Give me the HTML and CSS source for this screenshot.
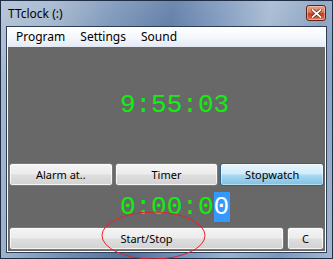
FILE: index.html
```html
<!DOCTYPE html>
<html>
<head>
<meta charset="utf-8">
<link rel="stylesheet" href="styles.css">
</head>
<body>
<div class="window">
  <div class="titlebar">
    <span class="title">TTclock (:)</span>
    <span class="close">
      <svg width="11" height="9" viewBox="0 0 11 9"><path d="M1.5 1 L9.5 8 M9.5 1 L1.5 8" stroke="#5a2418" stroke-width="3.2" stroke-linecap="square"/><path d="M1.5 1 L9.5 8 M9.5 1 L1.5 8" stroke="#ffffff" stroke-width="1.8" stroke-linecap="square"/></svg>
    </span>
  </div>
  <div class="client">
    <div class="menubar">
      <span class="menuitem">Program</span>
      <span class="menuitem">Settings</span>
      <span class="menuitem">Sound</span>
    </div>
    <div class="panel">
      <div class="clock">9:55:03</div>
      <div class="row3">
        <button class="btn">Alarm at..</button>
        <button class="btn">Timer</button>
        <button class="btn active">Stopwatch</button>
      </div>
      <div class="watch"><span>0:00:0</span><span class="sel">0</span></div>
      <div class="row2">
        <button class="btn">Start/Stop</button>
        <button class="btn">C</button>
      </div>
    </div>
  </div>
  <svg class="ring" width="105" height="49" viewBox="0 0 105 49"><ellipse cx="52.5" cy="24.5" rx="51.5" ry="23.5" fill="none" stroke="#e8202a" stroke-width="1"/></svg>
</div>
</body>
</html>
```
FILE: styles.css
```css
html, body {
  margin: 0;
  padding: 0;
  background: #ffffff;
}
.window {
  position: relative;
  box-sizing: border-box;
  width: 333px;
  height: 259px;
  border: 1px solid #1f2d45;
  padding: 0 5px 5px 5px;
  display: flex;
  flex-direction: column;
  background:
    linear-gradient(180deg, rgba(255,255,255,0.18) 0%, rgba(255,255,255,0) 30%),
    linear-gradient(100deg, #a9bbd0 0%, #9cb0c8 14%, #6f8cb3 30%, #4f6f9d 46%, #6f8db6 58%, #9db3cc 72%, #7c97bc 86%, #a4b8cf 100%);
  font-family: "Noto Sans", "Open Sans", sans-serif;
}
.titlebar {
  height: 25px;
  display: flex;
  justify-content: space-between;
  align-items: flex-start;
  padding-left: 2px;
}
.title {
  font-size: 12px;
  line-height: 14px;
  margin-top: 6px;
  color: #000;
}
.close {
  box-sizing: border-box;
  width: 20px;
  height: 16px;
  margin-top: 4px;
  margin-right: 1px;
  border: 1px solid #5e2317;
  border-radius: 3px;
  display: flex;
  align-items: center;
  justify-content: center;
  background: linear-gradient(180deg, #eba48c 0%, #d8765a 45%, #c2401f 55%, #d0583a 80%, #e58a66 100%);
  box-shadow: inset 0 0 0 1px rgba(255,220,200,0.45);
}
.client {
  flex: 1;
  display: flex;
  flex-direction: column;
  border: 1px solid #2e3d57;
  background: #ffffff;
  padding: 0 1px 1px 1px;
}
.menubar {
  height: 20px;
  display: flex;
  align-items: center;
  padding-left: 0;
  background: linear-gradient(180deg, #ffffff 0%, #f5f8fc 50%, #e3e9f3 100%);
  border-bottom: 0;
  font-size: 12px;
  color: #000;
}
.menuitem {
  padding: 0 7px 0 8px;
  line-height: 16px;
}
.panel {
  flex: 1;
  background: #686868;
  display: flex;
  flex-direction: column;
  padding: 0 1px 1px 1px;
}
.clock {
  height: 116px;
  display: flex;
  align-items: center;
  justify-content: center;
  padding-left: 16px;
  font-family: "Liberation Mono", "DejaVu Sans Mono", monospace;
  font-size: 26px;
  color: #11ee11;
}
.watch {
  height: 41px;
  display: flex;
  align-items: center;
  justify-content: center;
  padding-left: 16px;
  font-family: "Liberation Mono", "DejaVu Sans Mono", monospace;
  font-size: 26px;
  line-height: 30px;
  color: #11ee11;
}
.watch .sel {
  background: #3399ff;
  color: #ffffff;
  box-shadow: 1px 0 0 #d8701c;
}
.row3 {
  height: 23px;
  display: grid;
  grid-template-columns: 1fr 1fr 1fr;
  gap: 2px;
}
.row2 {
  height: 23px;
  display: grid;
  grid-template-columns: 1fr 37px;
  gap: 3px;
}
.btn {
  margin: 0;
  padding: 0;
  font-family: "Noto Sans", "Open Sans", sans-serif;
  font-size: 11px;
  color: #000;
  border: 1px solid #7a7a7a;
  border-radius: 3px;
  background: linear-gradient(180deg, #f4f4f4 0%, #ececec 48%, #dedede 52%, #d2d2d2 100%);
  box-shadow: inset 0 0 0 1px rgba(255,255,255,0.75);
}
.btn.active {
  border-color: #2c628b;
  background: linear-gradient(180deg, #e8f5fc 0%, #d0ebf9 48%, #a9daf2 52%, #7fc0e2 100%);
  box-shadow: inset 0 0 0 1px rgba(255,255,255,0.45);
}
.ring {
  position: absolute;
  left: 100px;
  top: 210px;
}
```
